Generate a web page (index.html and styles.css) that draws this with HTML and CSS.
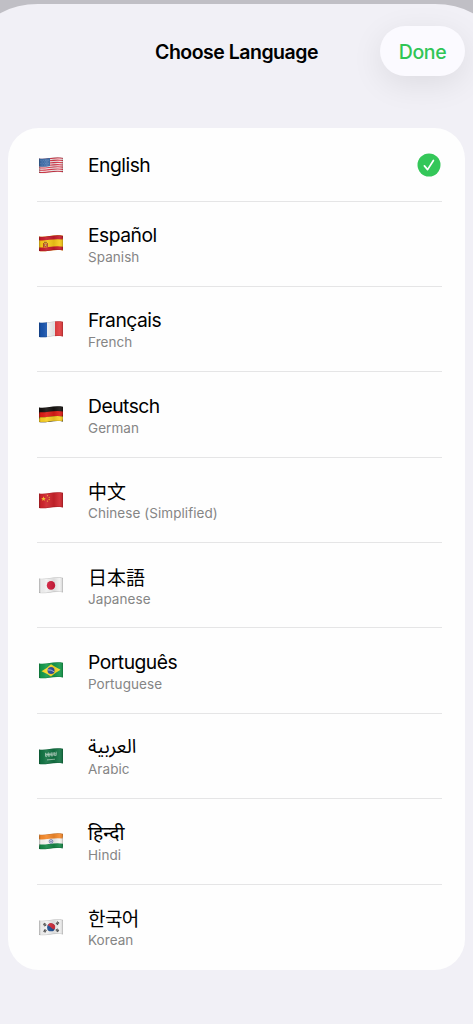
FILE: index.html
```html
<!DOCTYPE html>
<html lang="en">
<head>
<meta charset="utf-8">
<title>Choose Language</title>
<link rel="stylesheet" href="styles.css">
</head>
<body>
<svg class="defs" width="0" height="0" aria-hidden="true">
  <defs>
    <clipPath id="wave"><path d="M0 1.4C7 2.7 14-.9 24 .8V15.4C14 13.7 7 17.3 0 16.1Z"/></clipPath>
    <linearGradient id="shade">
      <stop offset="0" stop-color="#000" stop-opacity=".18"/>
      <stop offset=".1" stop-color="#000" stop-opacity=".03"/>
      <stop offset=".3" stop-color="#fff" stop-opacity=".08"/>
      <stop offset=".62" stop-color="#000" stop-opacity=".09"/>
      <stop offset=".85" stop-color="#fff" stop-opacity=".08"/>
      <stop offset="1" stop-color="#000" stop-opacity=".14"/>
    </linearGradient>
    <path id="curve" d="M0 1.4C7 2.7 14-.9 24 .8"/>
    <g id="finish">
      <path d="M0 1.4C7 2.7 14-.9 24 .8V15.4C14 13.7 7 17.3 0 16.1Z" fill="url(#shade)"/>
      <path d="M0 1.4C7 2.7 14-.9 24 .8V15.4C14 13.7 7 17.3 0 16.1Z" fill="none" stroke="#000" stroke-opacity=".25" stroke-width=".7"/>
    </g>
  </defs>
</svg>
<main class="sheet">
  <header class="bar">
    <h1 class="title">Choose Language</h1>
    <button class="done">Done</button>
  </header>
  <ul class="list">
    <li class="row row-first">
      <svg class="flag" viewBox="0 0 24 17"><g clip-path="url(#wave)"><path fill="#f4eeee" d="M0 0h24v17H0z"/>
        <g fill="none" stroke="#d8384a" stroke-width="1.15"><use href="#curve" y=".5"/><use href="#curve" y="2.72"/><use href="#curve" y="4.94"/><use href="#curve" y="7.16"/><use href="#curve" y="9.38"/><use href="#curve" y="11.6"/><use href="#curve" y="13.85"/></g>
        <path fill="#3d6ca8" d="M0 0H11V8.9C7 9.9 4 9.9 0 9.5Z"/><path stroke="#a9c1dc" stroke-width=".5" stroke-dasharray=".5 1.2" d="M1 3.4H10M1.8 5H10M1 6.6H10M1.8 8.1H10"/>
        <use href="#finish"/></g></svg>
      <div class="text"><span class="name" lang="en">English</span></div>
      <svg class="check" viewBox="0 0 24 24"><circle cx="12" cy="12" r="11.5" fill="#34c759"/><path d="M7.4 12.9l3.2 3.7 5.8-9.1" fill="none" stroke="#fff" stroke-width="1.7" stroke-linecap="round" stroke-linejoin="round"/></svg>
    </li>
    <li class="row">
      <svg class="flag" viewBox="0 0 24 17"><g clip-path="url(#wave)"><path fill="#f7ca18" d="M0 0h24v17H0z"/>
        <g fill="none" stroke="#c61b2b" stroke-width="4.2"><use href="#curve" y="1.7"/><use href="#curve" y="13"/></g>
        <path fill="#b34a22" d="M4 8h1v4.5H4zM8 8h1v4.5H8zM5.2 8.8h2.6v2.6q-1.3 1.5-2.6 0z"/><path fill="#a36a20" d="M5 6.7h3v1.6H5z"/><path fill="#ddb79f" d="M5.9 9.4h1.2v1.4H5.9z"/>
        <use href="#finish"/></g></svg>
      <div class="text"><span class="name" lang="es">Español</span><span class="sub">Spanish</span></div>
    </li>
    <li class="row">
      <svg class="flag" viewBox="0 0 24 17"><g clip-path="url(#wave)"><path fill="#f4f4f4" d="M0 0h24v17H0z"/><path fill="#1954ad" d="M0 0h8v17H0z"/><path fill="#e33b3d" d="M16 0h8v17h-8z"/>
        <use href="#finish"/></g></svg>
      <div class="text"><span class="name" lang="fr">Français</span><span class="sub">French</span></div>
    </li>
    <li class="row">
      <svg class="flag" viewBox="0 0 24 17"><g clip-path="url(#wave)"><path fill="#171311" d="M0 0h24v17H0z"/>
        <g fill="none" stroke-width="5"><use href="#curve" y="7.2" stroke="#dc1d16"/><use href="#curve" y="12.2" stroke="#f8cf24"/></g>
        <use href="#finish"/></g></svg>
      <div class="text"><span class="name" lang="de">Deutsch</span><span class="sub">German</span></div>
    </li>
    <li class="row">
      <svg class="flag" viewBox="0 0 24 17"><g clip-path="url(#wave)"><path fill="#cf242c" d="M0 0h24v17H0z"/>
        <path fill="#f6c62d" d="M4.5 4.3l.6 1.6 1.8.1-1.4 1.1.5 1.7-1.5-.9-1.5.9.5-1.7L2.1 6l1.8-.1z"/><g fill="#eeb12c"><circle cx="8.5" cy="3.7" r=".65"/><circle cx="10.2" cy="5.3" r=".65"/><circle cx="10.2" cy="7.5" r=".65"/><circle cx="8.5" cy="9.1" r=".65"/></g>
        <use href="#finish"/></g></svg>
      <div class="text"><span class="name name-cjk" lang="zh-Hans">中文</span><span class="sub">Chinese (Simplified)</span></div>
    </li>
    <li class="row">
      <svg class="flag" viewBox="0 0 24 17"><g clip-path="url(#wave)"><path fill="#f1f1f1" d="M0 0h24v17H0z"/><ellipse cx="12" cy="8.4" rx="4.2" ry="4.3" fill="#d21e3d"/>
        <use href="#finish"/></g></svg>
      <div class="text"><span class="name name-cjk name-ja" lang="ja">日本語</span><span class="sub">Japanese</span></div>
    </li>
    <li class="row">
      <svg class="flag" viewBox="0 0 24 17"><g clip-path="url(#wave)"><path fill="#159a4c" d="M0 0h24v17H0z"/><path fill="#f8d928" d="M2.5 9.2Q8 6.5 12 2.3q4.6 3 9.5 5.4Q16.4 10.6 12 14.6 7.6 11.3 2.5 9.2z"/><circle cx="12" cy="8.5" r="3.5" fill="#2c4c9e"/><path d="M8.8 7.9q3.5-.5 6.3 1.9" fill="none" stroke="#cdd8ec" stroke-width=".8"/>
        <use href="#finish"/></g></svg>
      <div class="text"><span class="name" lang="pt">Português</span><span class="sub">Portuguese</span></div>
    </li>
    <li class="row">
      <svg class="flag" viewBox="0 0 24 17"><g clip-path="url(#wave)"><path fill="#137444" d="M0 0h24v17H0z"/><g fill="none" stroke="#c4dccf" stroke-width=".7"><path d="M6.5 4.8v3.500q1.200.8 1.600-.3V5.100M9.400 4.400v3.900l1.500-.2V4.900M12.300 4.300V8l1.700-.2V4.200M15.300 4v3.600l1.900-.2V3.700M7 6.700l10.300-.9"/><path d="M8 11.900l8-.7"/></g>
        <use href="#finish"/></g></svg>
      <div class="text"><span class="name name-ar" lang="ar">العربية</span><span class="sub">Arabic</span></div>
    </li>
    <li class="row">
      <svg class="flag" viewBox="0 0 24 17"><g clip-path="url(#wave)"><path fill="#f4f3f0" d="M0 0h24v17H0z"/>
        <g fill="none" stroke-width="5.2"><use href="#curve" y="2.2" stroke="#f58a2c"/><use href="#curve" y="12.5" stroke="#168747"/></g>
        <circle cx="12" cy="8.4" r="1.9" fill="#d8dbed" stroke="#4f5aa5" stroke-width=".6"/><circle cx="12" cy="8.4" r=".6" fill="#4f5aa5"/>
        <use href="#finish"/></g></svg>
      <div class="text"><span class="name name-hi" lang="hi">हिन्दी</span><span class="sub">Hindi</span></div>
    </li>
    <li class="row">
      <svg class="flag" viewBox="0 0 24 17"><g clip-path="url(#wave)"><path fill="#f0f0f0" d="M0 0h24v17H0z"/>
        <circle cx="12" cy="8.4" r="3.9" fill="#1e5094"/><path fill="#d5303e" d="M8.7 6.3A3.9 3.9 0 0 1 15.6 10Q14 11 12 8.6 10 6.4 8.7 6.3z"/>
        <g stroke="#292929" stroke-width="2.6" stroke-dasharray=".75 .3"><path d="M4.9 4.4l1.9 2.6M19.4 3.1l-1.9 2.5M6.800 10.700L5 13.300M17.500 10.200l1.900 2.500"/></g>
        <use href="#finish"/></g></svg>
      <div class="text"><span class="name name-ko" lang="ko">한국어</span><span class="sub">Korean</span></div>
    </li>
  </ul>
</main>
</body>
</html>
```
FILE: styles.css
```css
* { box-sizing: border-box; }

body {
  margin: 0;
  padding-top: 3.5px;
  height: 1024px;
  overflow: hidden;
  background: #c0bfc5;
  font-family: Inter, "Noto Sans CJK SC", sans-serif;
  color: #000;
}

.defs { display: block; height: 0; }

.sheet {
  height: 1020.5px;
  margin: 0 -14px;
  padding: 0 22px;
  background: #f1f0f6;
  border-radius: 52px 52px 0 0 / 30px 30px 0 0;
}

.bar {
  display: grid;
  grid-template-columns: 85px 1fr 85px;
  align-items: center;
  height: 124.5px;
  padding: 22.5px 0 52px;
}

.title {
  grid-column: 2;
  margin: 0;
  padding-top: 2px;
  text-align: center;
  font-size: 19.5px;
  font-weight: 600;
  letter-spacing: -0.5px;
  white-space: nowrap;
}

.done {
  height: 50px;
  padding: 2px 0 0;
  border: 0;
  border-radius: 25px;
  background: #fbfaff;
  box-shadow: 0 8px 32px rgba(0, 0, 0, 0.085);
  color: #30c556;
  font: 500 19.5px Inter, sans-serif;
  letter-spacing: -0.4px;
}

.list {
  margin: 0;
  padding: 0 23px 0 29px;
  list-style: none;
  background: #fefefe;
  border-radius: 31px;
}

.row {
  display: grid;
  grid-template-columns: 51px 1fr 25px;
  align-items: center;
  height: 85.4px;
  padding-top: 0.6px;
  border-bottom: 1px solid #e5e5e6;
}

.row-first { height: 73.5px; padding-top: 2px; }
.row:last-child { border-bottom: 0; padding-bottom: 1px; }

.flag {
  width: 24px;
  height: 17px;
  margin-left: 2px;
}

.text {
  display: flex;
  flex-direction: column;
}

.name {
  font-size: 19.3px;
  line-height: 26px;
  letter-spacing: -0.5px;
  white-space: nowrap;
}

.name-cjk { font-family: "Noto Sans CJK SC", sans-serif; font-size: 19px; letter-spacing: 0; }
.name-ja { font-family: "Noto Sans CJK JP", sans-serif; }
.name-ko { font-family: "Noto Sans CJK KR", sans-serif; font-size: 19px; letter-spacing: -0.6px; }
.name-ar { font-family: "Noto Sans Arabic", "Noto Sans", "DejaVu Sans", sans-serif; letter-spacing: 0; }
.name-hi {
  font-family: "Noto Sans Devanagari", "Noto Sans", sans-serif;
  letter-spacing: 0;
  line-height: 32px;
  margin-bottom: -6px;
}
.name-hi + .sub { margin-top: 0; }

.sub {
  font-size: 13.5px;
  line-height: 18px;
  letter-spacing: 0.06px;
  color: #858585;
}

.check { width: 24px; height: 24px; }
```
